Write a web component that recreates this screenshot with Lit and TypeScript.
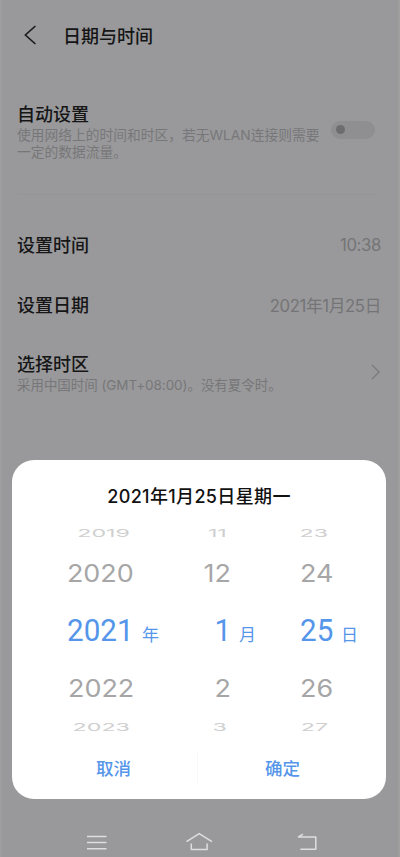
import { LitElement, html, css } from "lit";
import { customElement, property } from "lit/decorators.js";

@customElement("setting-row")
class SettingRow extends LitElement {
  @property() label = "";
  @property() value = "";
  @property() note = "";
  static styles = css`
    :host { display: flex; align-items: center; justify-content: space-between; height: 60px; padding: 0 19px 0 17px; }
    .label { font-size: 18px; line-height: 22px; font-weight: 500; color: #161617; padding-top: 2px; }
    .note { font-size: 13.5px; line-height: 17px; color: #777779; margin-top: 1px; letter-spacing: -0.05px; white-space: nowrap; }
    .value { font-family: Inter, "Noto Sans CJK SC", sans-serif; font-size: 16.7px; letter-spacing: -0.35px; color: #747476; }
  `;
  render() {
    return html`<div>
        <div class="label">${this.label}</div>
        ${this.note ? html`<div class="note">${this.note}</div>` : ""}
      </div>
      ${this.value ? html`<div class="value">${this.value}</div>` : html`<slot></slot>`}`;
  }
}

@customElement("date-wheel")
class DateWheel extends LitElement {
  static styles = css`
    :host { display: block; height: 215px; color: #a6a6a7; font-family: Inter, sans-serif; }
    .row { display: grid; grid-template-columns: 122px 36px 61px 41px 61px 1fr; align-items: center; height: 57px; }
    .num { text-align: right; font-size: 24.5px; line-height: 30px; white-space: nowrap; }
    .num span { display: inline-block; transform: scaleX(1.1); transform-origin: 100% 50%; }
    .edge { height: 22px; color: #cfcfd0; }
    .edge .num { line-height: 22px; font-size: 20px; }
    .edge .num span { transform: translateX(-4.5px) scale(1.16, 0.54); }
    .current { height: 58px; color: #5596ea; }
    .current .num { font-family: Roboto, sans-serif; font-size: 30.5px; padding-top: 2px; }
    .current .num span { transform: scaleX(0.97); }
    .unit { font-family: "Noto Sans CJK SC", sans-serif; font-size: 17px; line-height: 24px; padding: 7px 0 0 8px; }
  `;
  rows = [
    { kind: "edge", v: ["2019", "11", "23"] },
    { kind: "", v: ["2020", "12", "24"] },
    { kind: "current", v: ["2021", "1", "25"] },
    { kind: "", v: ["2022", "2", "26"] },
    { kind: "edge", v: ["2023", "3", "27"] },
  ];
  render() {
    const units = ["年", "月", "日"];
    return html`${this.rows.map(
      (r) => html`<div class="row ${r.kind}">
        ${r.v.map((n, i) => html`<div class="num"><span>${n}</span></div>
          <div class="unit">${r.kind === "current" ? units[i] : ""}</div>`)}
      </div>`
    )}`;
  }
}

@customElement("app-root")
class AppRoot extends LitElement {
  static styles = css`
    :host { display: block; position: relative; box-sizing: border-box; width: 400px; height: 857px; overflow: hidden;
      background: #99999b; border-left: 2px solid #9d9d9f; border-right: 2px solid #a09f9d;
      font-family: Inter, "Noto Sans CJK SC", sans-serif; }
    .page { margin: 0 -2px; }
    header { display: flex; align-items: center; height: 70px; padding-left: 23px; }
    header svg { flex: none; }
    h1 { margin: 3px 0 0 26px; font-size: 18px; font-weight: 500; line-height: 24px; color: #151516; }
    .auto { display: flex; align-items: center; justify-content: space-between; height: 60px; margin-top: 32px; padding: 0 25px 0 17px; }
    .title { font-size: 18px; line-height: 22px; font-weight: 500; color: #161617; }
    .desc { font-size: 13.75px; line-height: 16.5px; color: #777779; margin-top: 1px; white-space: nowrap; }
    .toggle { box-sizing: border-box; width: 44px; height: 18px; margin-bottom: 4px; border-radius: 9px; background: #8f8f91; padding: 4px 5px; }
    .knob { width: 9px; height: 9px; border-radius: 50%; background: #6d6d6f; }
    .rule { height: 1px; margin: 32px 23px 20px 17px; background: #959598; }
    .zone { height: 76px; }
    .zone svg { margin-bottom: 2px; }
    .dialog { position: absolute; left: 10px; top: 460px; width: 374px; height: 339px; border-radius: 22px; background: #fff; }
    .heading { padding-top: 25px; height: 37px; text-align: center; font-size: 18px; letter-spacing: 0.35px; line-height: 24px; font-weight: 500; color: #111; }
    .actions { display: flex; align-items: center; height: 30px; margin-top: 16px; color: #5596ea; font-size: 17.5px; font-weight: 500; }
    .actions div { box-sizing: border-box; width: 186px; height: 30px; line-height: 32px; text-align: center; }
    .cancel { padding-left: 18px; border-right: 1px solid #f8f8f8; }
    .confirm { padding-right: 17px; }
    nav { position: absolute; left: -2px; right: -2px; bottom: 0; height: 34px; }
    nav svg { display: block; }
  `;
  render() {
    return html`
      <div class="page">
        <header>
          <svg width="14" height="22" viewBox="0 0 14 22" fill="none" stroke="#19191a" stroke-width="1.6"><path d="M12.4 2 2.4 11l10 9" /></svg>
          <h1>日期与时间</h1>
        </header>
        <section class="auto">
          <div>
            <div class="title">自动设置</div>
            <div class="desc">使用网络上的时间和时区，若无WLAN连接则需要<br />一定的数据流量。</div>
          </div>
          <div class="toggle"><div class="knob"></div></div>
        </section>
        <div class="rule"></div>
        <setting-row label="设置时间" value="10:38"></setting-row>
        <setting-row label="设置日期" value="2021年1月25日"></setting-row>
        <setting-row class="zone" label="选择时区" note="采用中国时间 (GMT+08:00)。没有夏令时。">
          <svg width="10" height="16" viewBox="0 0 10 16" fill="none" stroke="#7b7b7d" stroke-width="1.4"><path d="m1 1 7 7-7 7" /></svg>
        </setting-row>
      </div>
      <div class="dialog">
        <div class="heading">2021年1月25日星期一</div>
        <date-wheel></date-wheel>
        <div class="actions"><div class="cancel">取消</div><div class="confirm">确定</div></div>
      </div>
      <nav>
        <svg width="400" height="34" viewBox="0 0 400 34" fill="none" stroke="#dededf" stroke-width="1.5" stroke-linejoin="round">
          <path d="M87 13.4h19.5M87 19.6h19.5M87 25.8h19.5" />
          <path d="M186.5 18.6 199.2 10.6 212 18.6M191.3 20.4v6.2h4.5M202.6 26.6h4.5v-6.2M195.8 26.6h6.8" />
          <path d="M303 11.2 298.5 14h17.3v12.2h-15.5" />
        </svg>
      </nav>
    `;
  }
}
